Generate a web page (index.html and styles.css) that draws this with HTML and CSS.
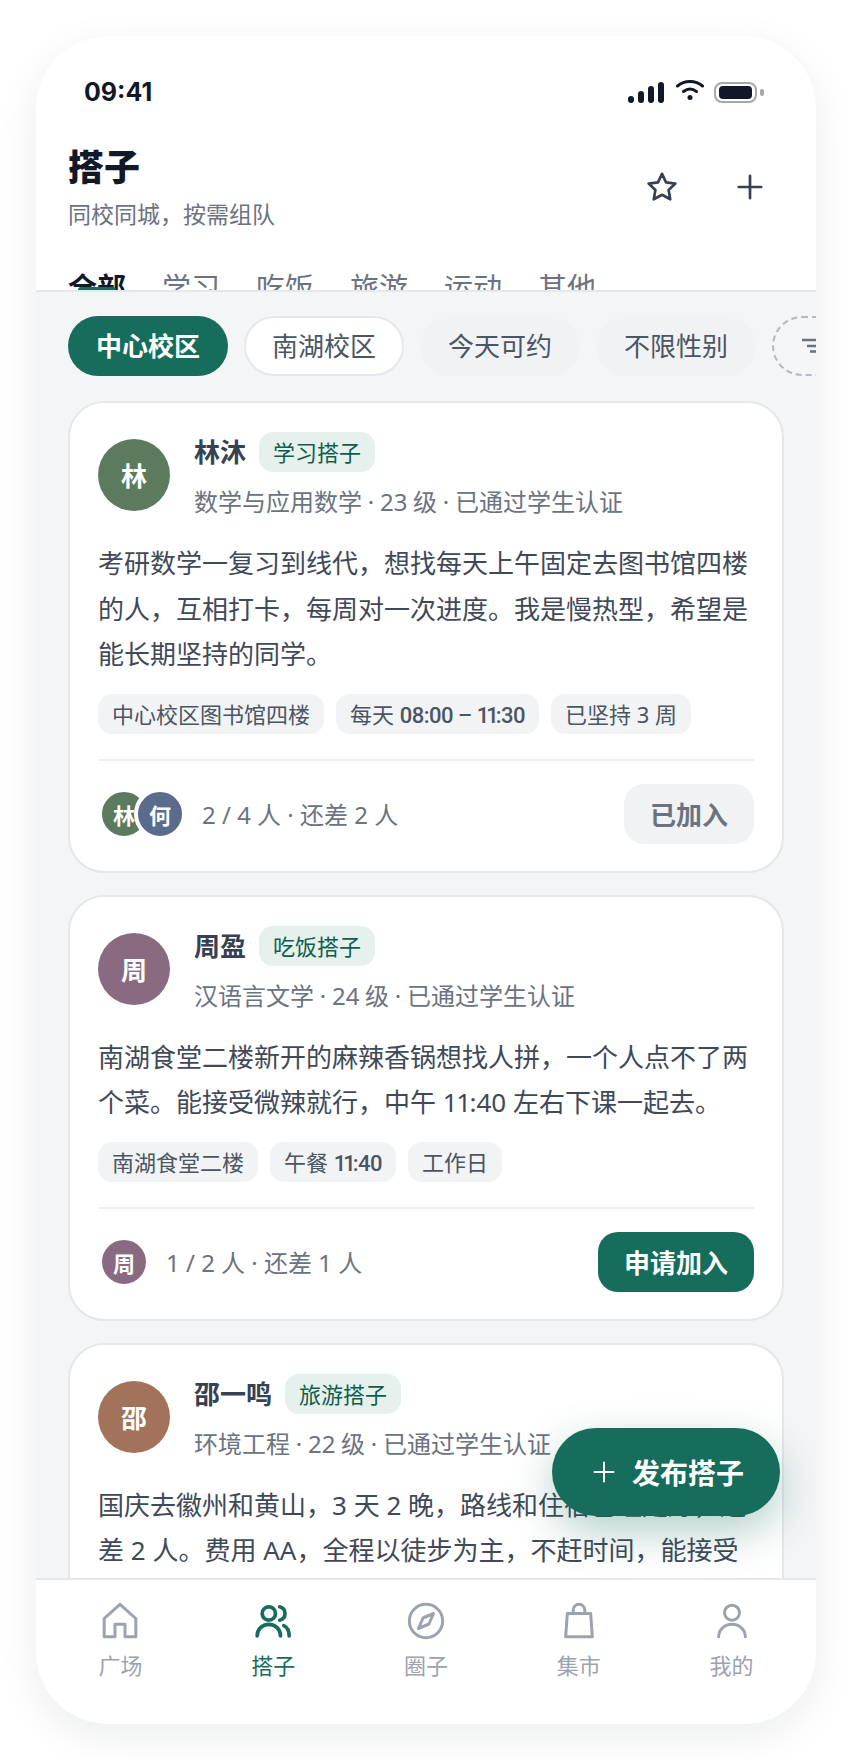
FILE: index.html
```html
<!DOCTYPE html>
<html lang="zh-CN">
<head>
    <meta charset="UTF-8" />
    <meta name="viewport" content="width=device-width, initial-scale=1.0" />
    <title>搭子</title>
    <link rel="stylesheet" href="styles.css">
</head>
<body>
    <div class="phone">
        <div class="topbar">
            <div class="statusbar">
                <span class="time">09:41</span>
                <div class="statusicons">
                    <svg class="signal" width="36" height="21" viewBox="0 0 36 21"><rect x="0" y="14" width="6" height="7" rx="3"/><rect x="10" y="9" width="6" height="12" rx="3"/><rect x="20" y="4" width="6" height="17" rx="3"/><rect x="30" y="0" width="6" height="21" rx="3"/></svg>
                    <svg class="wifi" width="28" height="22" viewBox="1 0 28 22" fill="none" stroke="#111827" stroke-width="3" stroke-linecap="round"><path d="M2.500 7C9.500 1 20.500 1 27.500 7"/><path d="M8.500 12.500C12.500 9.500 17.500 9.500 21.500 12.500"/><circle cx="15" cy="18.500" r="2.500" fill="#111827" stroke="none"/></svg>
                    <svg width="50" height="21" viewBox="0 0 50 21"><rect x="1" y="1" width="41" height="19" rx="7" fill="none" stroke="#a8a8a8" stroke-width="2"/><rect x="5" y="4" width="33" height="13" rx="4" fill="#111827"/><rect x="46" y="7" width="4" height="7" rx="2" fill="#a8a8a8"/></svg>
                </div>
            </div>
            <div class="pagehead">
                <div>
                    <h1>搭子</h1>
                    <p>同校同城，按需组队</p>
                </div>
                <div class="headbtns">
                    <button>
                        <svg width="36" height="36" viewBox="0 0 24 24" fill="none" stroke="#374151" stroke-width="1.800" stroke-linejoin="round"><path d="M12 3.200l2.700 5.700 6.200.8-4.500 4.300 1.100 6.200-5.500-3-5.500 3 1.100-6.200-4.500-4.300 6.200-.8z"/></svg>
                    </button>
                    <button>
                        <svg width="36" height="36" viewBox="0 0 24 24" fill="none" stroke="#374151" stroke-width="1.800" stroke-linecap="round"><path d="M12 4.500v15M4.500 12h15"/></svg>
                    </button>
                </div>
            </div>
            <div class="tabs">
                <span class="tab active">全部</span>
                <span class="tab">学习</span>
                <span class="tab">吃饭</span>
                <span class="tab">旅游</span>
                <span class="tab">运动</span>
                <span class="tab">其他</span>
            </div>
        </div>

        <div class="main">
            <div class="chips">
                <span class="chip on">中心校区</span>
                <span class="chip white">南湖校区</span>
                <span class="chip">今天可约</span>
                <span class="chip">不限性别</span>
                <span class="chip dashed">
                    <svg width="24" height="24" viewBox="0 0 24 24" fill="none" stroke="#6b7280" stroke-width="2.500"><path d="M0 6h24M5 12h14M8 17.500h8"/></svg>
                    筛选
                </span>
            </div>

            <div class="cardlist">
                <div class="card">
                    <div class="cardhead">
                        <div class="avatar green">林</div>
                        <div class="who">
                            <div class="nameline"><b>林沐</b><span class="kind">学习搭子</span></div>
                            <div class="meta">数学与应用数学 · 23 级 · 已通过学生认证</div>
                        </div>
                    </div>
                    <p class="desc">考研数学一复习到线代，想找每天上午固定去图书馆四楼的人，互相打卡，每周对一次进度。我是慢热型，希望是能长期坚持的同学。</p>
                    <div class="tags">
                        <span>中心校区图书馆四楼</span>
                        <span>每天 <em>08:00 – <i>11</i>:30</em></span>
                        <span>已坚持 3 周</span>
                    </div>
                    <div class="cardfoot">
                        <div class="minis">
                            <span class="mini green">林</span>
                            <span class="mini blue">何</span>
                        </div>
                        <span class="count">2 / 4 人 · 还差 2 人</span>
                        <button class="joinbtn done">已加入</button>
                    </div>
                </div>

                <div class="card">
                    <div class="cardhead">
                        <div class="avatar plum">周</div>
                        <div class="who">
                            <div class="nameline"><b>周盈</b><span class="kind">吃饭搭子</span></div>
                            <div class="meta">汉语言文学 · 24 级 · 已通过学生认证</div>
                        </div>
                    </div>
                    <p class="desc">南湖食堂二楼新开的麻辣香锅想找人拼，一个人点不了两个菜。能接受微辣就行，中午 <i>11</i>:40 左右下课一起去。</p>
                    <div class="tags">
                        <span>南湖食堂二楼</span>
                        <span>午餐 <em><i>11</i>:40</em></span>
                        <span>工作日</span>
                    </div>
                    <div class="cardfoot">
                        <div class="minis">
                            <span class="mini plum">周</span>
                        </div>
                        <span class="count">1 / 2 人 · 还差 1 人</span>
                        <button class="joinbtn">申请加入</button>
                    </div>
                </div>

                <div class="card">
                    <div class="cardhead">
                        <div class="avatar brown">邵</div>
                        <div class="who">
                            <div class="nameline"><b>邵一鸣</b><span class="kind">旅游搭子</span></div>
                            <div class="meta">环境工程 · 22 级 · 已通过学生认证</div>
                        </div>
                    </div>
                    <p class="desc">国庆去徽州和黄山，3 天 2 晚，路线和住宿已经定好，还差 2 人。费用 AA，全程以徒步为主，不赶时间，能接受早起的来。</p>
                </div>
            </div>

            <button class="fab">
                <svg width="24" height="24" viewBox="0 0 24 24" fill="none" stroke="#fff" stroke-width="2" stroke-linecap="round"><path d="M12 2.500v19M2.500 12h19"/></svg>
                发布搭子
            </button>
        </div>

        <div class="tabbar">
            <div class="navitem">
                <svg width="40" height="40" viewBox="0 0 24 24"><path d="M2.500 10.500L12 2l9.500 8.500V21.500h-6.500v-7.500H9v7.500H2.500z"/></svg>
                广场
            </div>
            <div class="navitem current">
                <svg width="40" height="40" viewBox="0 0 24 24"><circle cx="9.500" cy="7.500" r="4"/><path d="M2.500 21c0-4 3-7 7-7s7 3 7 7"/><path d="M16 3.500c2 .5 3.200 2.200 3.200 4s-1.200 3.500-3.200 4"/><path d="M18.500 14.800c2 1 3.200 3.500 3.200 6.200"/></svg>
                搭子
            </div>
            <div class="navitem">
                <svg width="40" height="40" viewBox="0 0 24 24"><circle cx="12" cy="12" r="10"/><path d="M16.500 7.500L13.800 13.800 7.500 16.500 10.200 10.200z"/></svg>
                圈子
            </div>
            <div class="navitem">
                <svg width="40" height="40" viewBox="0 0 24 24"><path d="M5 7.500h14l1 14H4z"/><path d="M8.500 7.500V5.500a3.500 3.500 0 0 1 7 0v2"/></svg>
                集市
            </div>
            <div class="navitem">
                <svg width="40" height="40" viewBox="0 0 24 24"><circle cx="12" cy="7" r="4.500"/><path d="M4 21.500c0-4.500 3.500-7.500 8-7.500s8 3 8 7.500"/></svg>
                我的
            </div>
        </div>
    </div>
</body>
</html>
```

FILE: styles.css
```css
* {
    margin: 0;
    padding: 0;
    box-sizing: border-box;
}
body {
    background-color: white;
    padding: 36px;
    font-family: "Noto Sans", "Noto Sans CJK SC", sans-serif;
    color: #374151;
}
button {
    font-family: inherit;
    border: none;
    background: none;
}
.phone {
    width: 780px;
    height: 1688px;
    border-radius: 72px;
    background-color: #f3f5f7;
    overflow: hidden;
    display: flex;
    flex-direction: column;
    box-shadow: 0 12px 40px rgba(17, 24, 39, 0.08);
}
.topbar {
    flex: none;
    height: 256px;
    background-color: white;
    border-bottom: 2px solid #e5e7eb;
    overflow: hidden;
}
.statusbar {
    height: 100px;
    padding: 12px 52px 0 48px;
    display: flex;
    justify-content: space-between;
    align-items: center;
}
.time {
    font-family: "Inter", sans-serif;
    font-size: 25px;
    font-weight: 700;
    color: #111827;
}
.statusicons {
    display: flex;
    align-items: center;
    gap: 10px;
}
.statusicons svg {
    fill: #111827;
    display: block;
}
.statusicons .signal {
    margin-right: 2px;
}
.statusicons .wifi {
    fill: none;
    margin-top: -4px;
}
.pagehead {
    padding: 8px 32px 0;
    display: flex;
    justify-content: space-between;
    align-items: center;
}
.pagehead h1 {
    font-size: 36px;
    line-height: 48px;
    font-weight: 900;
    color: #111827;
}
.pagehead p {
    margin-top: 6px;
    font-size: 23px;
    line-height: 32px;
    color: #6b7280;
}
.headbtns {
    display: flex;
    gap: 20px;
}
.headbtns button {
    width: 68px;
    height: 68px;
    display: flex;
    align-items: center;
    justify-content: center;
}
.tabs {
    margin-top: 38px;
    padding: 0 32px;
    display: flex;
    gap: 36px;
}
.tab {
    position: relative;
    font-size: 29px;
    line-height: 40px;
    color: #6b7280;
}
.tab.active {
    font-weight: 700;
    color: #111827;
}
.tab.active::after {
    content: "";
    position: absolute;
    left: 10px;
    right: 10px;
    top: 19px;
    height: 6px;
    border-radius: 3px;
    background-color: #176d5b;
}
.main {
    flex: 1;
    min-height: 0;
    overflow: hidden;
    position: relative;
}
.chips {
    padding: 24px 0 0 32px;
    display: flex;
    gap: 16px;
    white-space: nowrap;
}
.chip {
    flex: none;
    height: 60px;
    line-height: 60px;
    padding: 0 28px;
    border-radius: 30px;
    font-size: 26px;
    color: #4b5563;
    background-color: #f0f2f4;
}
.chip.on {
    background-color: #176d5b;
    color: white;
    font-weight: 700;
}
.chip.white {
    background-color: white;
    border: 2px solid #e5e7eb;
    line-height: 56px;
    padding: 0 26px;
}
.chip.dashed {
    background-color: transparent;
    border: 2px dashed #b4bac3;
    padding: 0 28px;
    display: flex;
    align-items: center;
    gap: 8px;
}
.cardlist {
    padding: 25px 32px 0;
    display: flex;
    flex-direction: column;
    gap: 22px;
}
.card {
    background-color: white;
    border: 2px solid #e5e7eb;
    border-radius: 36px;
    padding: 29px 28px 27px;
}
.cardhead {
    display: flex;
    align-items: flex-start;
    gap: 24px;
}
.avatar {
    flex: none;
    width: 72px;
    height: 72px;
    margin-top: 7px;
    border-radius: 50%;
    display: flex;
    align-items: center;
    justify-content: center;
    color: white;
    font-size: 26px;
    font-weight: 700;
}
.green {
    background-color: #5b7a5e;
}
.blue {
    background-color: #5a6b8c;
}
.plum {
    background-color: #8a6a80;
}
.brown {
    background-color: #a3725a;
}
.nameline {
    display: flex;
    align-items: center;
    gap: 13px;
}
.nameline b {
    font-size: 26px;
    line-height: 40px;
    color: #374151;
}
.kind {
    height: 40px;
    line-height: 40px;
    padding: 0 14px;
    border-radius: 14px;
    font-size: 22px;
    color: #0f5e4c;
    background-color: #e6f1ed;
}
.meta {
    margin-top: 13px;
    font-size: 24px;
    line-height: 34px;
    word-spacing: -0.5px;
    color: #6b7280;
}
.desc {
    margin-top: 22px;
    font-size: 26px;
    line-height: 45.500px;
    color: #3f4957;
}
.desc i {
    font-style: normal;
    letter-spacing: -1.500px;
}
.tags {
    margin-top: 16px;
    display: flex;
    gap: 12px;
}
.tags span {
    height: 40px;
    line-height: 40px;
    padding: 0 14px;
    border-radius: 14px;
    font-size: 22px;
    color: #4b5563;
    background-color: #f1f3f5;
}
.tags em {
    font-family: "Roboto", sans-serif;
    font-style: normal;
    font-weight: 500;
    letter-spacing: -0.500px;
}
.tags i {
    font-style: normal;
    letter-spacing: -3px;
}
.cardfoot {
    margin-top: 25px;
    padding-top: 23px;
    border-top: 2px solid #eef0f3;
    display: flex;
    align-items: center;
}
.minis {
    display: flex;
}
.mini {
    width: 52px;
    height: 52px;
    border: 4px solid white;
    border-radius: 50%;
    display: flex;
    align-items: center;
    justify-content: center;
    color: white;
    font-size: 22px;
    font-weight: 700;
}
.mini + .mini {
    margin-left: -16px;
}
.count {
    margin-left: 16px;
    font-size: 24px;
    color: #6b7280;
}
.joinbtn {
    margin-left: auto;
    width: 156px;
    height: 60px;
    border-radius: 20px;
    font-size: 26px;
    font-weight: 700;
    color: white;
    background-color: #176d5b;
}
.joinbtn.done {
    width: 130px;
    color: #6b7280;
    background-color: #f0f2f4;
}
.fab {
    position: absolute;
    right: 36px;
    bottom: 62px;
    width: 228px;
    height: 88px;
    padding-right: 36px;
    border-radius: 44px;
    display: flex;
    align-items: center;
    justify-content: flex-end;
    gap: 16px;
    font-size: 28px;
    font-weight: 700;
    color: white;
    background-color: #176d5b;
    box-shadow: 0 16px 44px rgba(23, 109, 91, 0.32);
}
.tabbar {
    flex: none;
    height: 146px;
    padding: 21px 8px 0;
    background-color: white;
    border-top: 2px solid #e5e7eb;
    display: flex;
}
.navitem {
    flex: 1;
    display: flex;
    flex-direction: column;
    align-items: center;
    gap: 9px;
    font-size: 22px;
    line-height: 30px;
    color: #9ca3af;
}
.navitem svg {
    fill: none;
    stroke: currentColor;
    stroke-width: 1.800;
    stroke-linecap: round;
    stroke-linejoin: round;
}
.navitem.current {
    color: #176d5b;
}
.navitem.current svg {
    stroke-width: 2.200;
}
```
